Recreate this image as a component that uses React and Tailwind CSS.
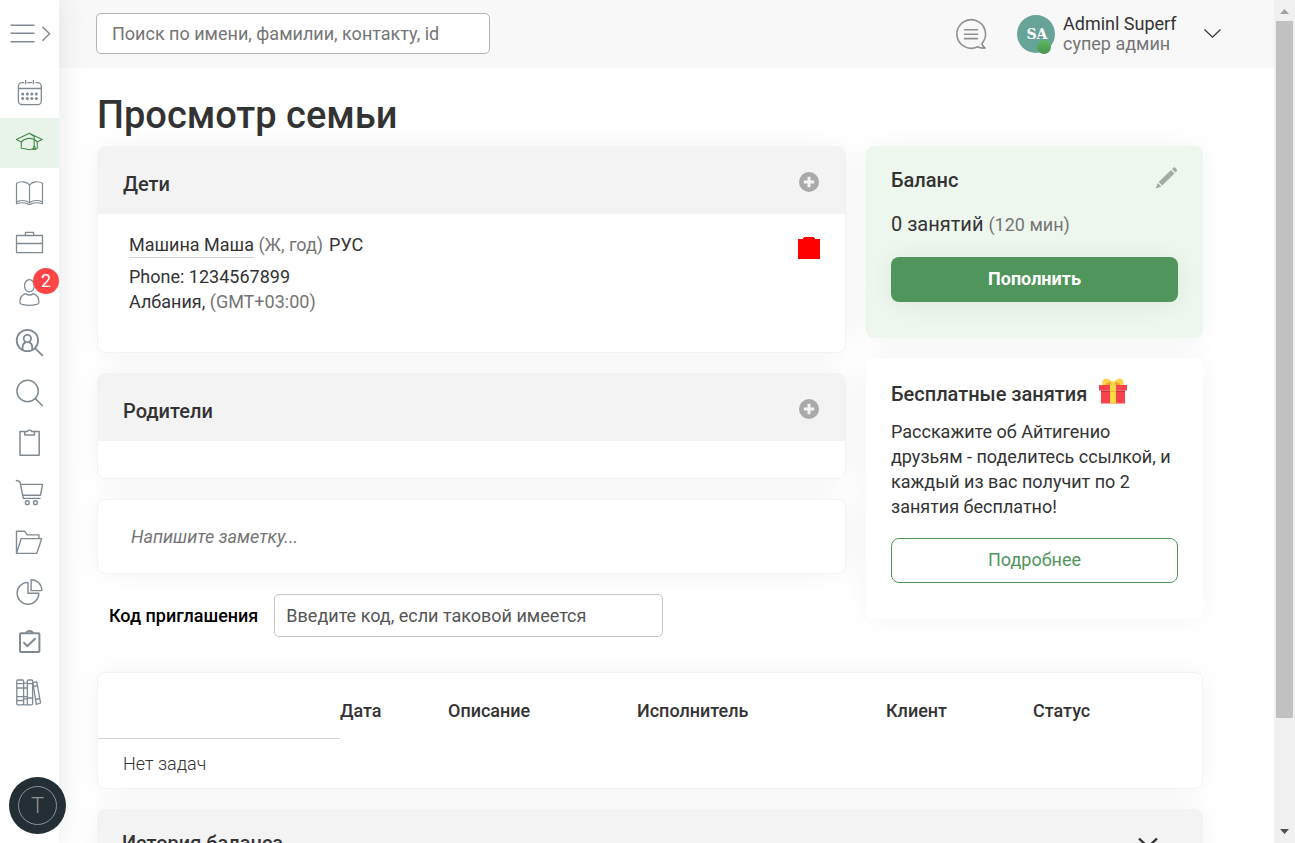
import React from "react";

const Icon = ({ children, width = 1.3 }) => (
  <svg
    viewBox="0 0 30 30"
    className="h-[30px] w-[30px]"
    fill="none"
    stroke="currentColor"
    strokeWidth={width}
    strokeLinecap="round"
    strokeLinejoin="round"
    aria-hidden="true"
  >
    {children}
  </svg>
);

const items = [
  {
    name: "Календарь",
    icon: (
      <Icon>
        <path d="M9.8 4.6H8A3.6 3.6 0 0 0 4.4 8.2v14.8A3.6 3.6 0 0 0 8 26.6h15.7a3.6 3.6 0 0 0 3.6-3.6V8.2A3.6 3.6 0 0 0 23.7 4.6h-1.8M13.6 4.6h4M4.400 10.500h22.900M11.700 2.300v3.400M19.400 2.300v3.400" />
        <g fill="currentColor" stroke="none">
          {[8.7, 13.3, 17.8, 22.3].map((x) => (
            <React.Fragment key={x}>
              <circle cx={x} cy="16" r="1.500" />
              <circle cx={x} cy="20.400" r="1.500" />
            </React.Fragment>
          ))}
        </g>
      </Icon>
    ),
  },
  {
    name: "Ученики",
    active: true,
    icon: (
      <Icon width={1.1}>
        <path d="M2.400 11.400 15.300 5.200l12.900 6.200-4.700 2.400M2.400 11.400l4.900 2.600v6.200q3.400.4 8 1.600 4-1.200 8-1.600v-6.200q-3.500-3.600-8-3.600t-8 3.600M15.300 5.200l4.900 3.300v10.500M20.200 17.500l-1.400 3.900h3l-1.600-3.900" />
      </Icon>
    ),
  },
  {
    name: "Учебники",
    icon: (
      <Icon width={1.2}>
        <path d="M15.500 6.800C12.500 3.400 7 2.800 2.500 5.300v18.600c4.500-1.900 9.500-1.700 13 .8 3.500-2.500 8.500-2.700 13-.8V5.300c-4.500-2.500-10-1.900-13 1.500v17.500M2.500 23.900v1.900c4.200-1.400 8.300-1.300 11.200.1q1.800 1 3.600 0c2.900-1.400 7-1.500 11.200-.1v-1.900" />
      </Icon>
    ),
  },
  {
    name: "Портфель",
    icon: (
      <Icon>
        <path d="M2.500 7.500h26v17.200h-26zM2.500 15.500h26M11.400 7.500V4.400h8.200v3.100" />
      </Icon>
    ),
  },
  {
    name: "Пользователи",
    badge: 2,
    icon: (
      <Icon>
        <ellipse cx="15.400" cy="7.800" rx="4.900" ry="6.100" />
        <path d="M11.600 15.600c-4 1.200-6 4.500-5.700 9.400.1 1.200 4.800 2.400 9.500 2.400s9.400-1.200 9.500-2.400c.3-4.900-1.700-8.200-5.700-9.400-2.500 1.800-5.100 1.800-7.600 0z" />
      </Icon>
    ),
  },
  {
    name: "Поиск людей",
    icon: (
      <Icon width={1.8}>
        <circle cx="13.400" cy="12.500" r="10.700" />
        <circle cx="13.400" cy="10.600" r="3.700" />
        <path d="M8.600 21.500v-2.600c0-2.100 1-3.600 2.800-4.500M18.200 21.500v-2.600c0-2.100-1-3.600-2.800-4.500M21.200 20.400l7.200 6.900" />
      </Icon>
    ),
  },
  {
    name: "Поиск",
    icon: (
      <Icon width={1.5}>
        <circle cx="13.600" cy="13" r="10.700" />
        <path d="m21.300 20.600 7 6.900" />
      </Icon>
    ),
  },
  {
    name: "Задания",
    icon: (
      <Icon width={1.5}>
        <path d="M10.800 3.500H6v23.700h19.200V3.500h-4.800M10.800 3.500v3.400h9.600V3.500h-2.600q-.3-1.200-2.200-1.200t-2.200 1.200z" />
      </Icon>
    ),
  },
  {
    name: "Магазин",
    icon: (
      <Icon width={1.4}>
        <path d="M2.400 2.500q2.900.2 3.700 1.800l3.200 16.100h16.800M6.600 6.400h21.900l-2 10.800H8.700" />
        <circle cx="13.300" cy="24.700" r="1.900" />
        <circle cx="21.400" cy="24.700" r="1.900" />
      </Icon>
    ),
  },
  {
    name: "Файлы",
    icon: (
      <Icon width={1.4}>
        <path d="M2.500 25.400V3.200h8.100l2.600 3.700h11.700v3.700M2.500 25.400l4.700-14.800h20.500l-4.900 14.800z" />
      </Icon>
    ),
  },
  {
    name: "Отчёты",
    icon: (
      <Icon width={1.4}>
        <path d="M14 4.400a10.900 10.900 0 1 0 10.900 10.900H14zM17.100 1.700v10.900h10.700C27.800 6.400 23.300 1.700 17.100 1.700z" />
      </Icon>
    ),
  },
  {
    name: "Задачи",
    icon: (
      <Icon width={2}>
        <rect x="6" y="5.200" width="19.400" height="18.700" rx="1" />
        <path d="M12.400 5q.6-2 3.200-2t3.200 2M10 14.700l3.200 3.500 7.800-7.500" />
      </Icon>
    ),
  },
  {
    name: "Библиотека",
    icon: (
      <Icon width={1.3}>
        <rect x="2.800" y="2" width="6.800" height="24.800" rx="1" />
        <rect x="13.400" y="2" width="5.200" height="24.800" rx="1" />
        <path d="M9.600 5.200h3.800M9.600 26.800h3.800M2.800 5.700h6.800M2.800 10h10.600M2.800 18.700h10.600M2.800 22.500h6.800M9.600 20.900h3.800M13.400 5.700h5.200M13.400 20h5.200M18.800 4.700l4-.8L26.600 25l-4.300 1.300zM19.300 8.500l4.200-.8M21.500 21.500l4.300-1" />
      </Icon>
    ),
  },
];

const Sidebar = () => (
  <aside className="relative z-20 flex w-[59px] shrink-0 flex-col bg-white text-[#7f8a93] shadow-[0_0_30px_rgba(0,0,0,0.1)]">
    <button aria-label="Развернуть меню" className="flex h-[68px] w-full items-center pl-[10px]">
      <svg viewBox="0 0 42 20" className="h-5 w-[42px]" fill="none" stroke="currentColor" strokeWidth="1.400">
        <path d="M.5 1.200h24M.5 9.200h24M.5 17.800h24M32.400 2.800l7.200 6.900-7.200 7" />
      </svg>
    </button>
    <nav className="flex flex-col">
      {items.map((it) => (
        <a
          key={it.name}
          href="#"
          aria-label={it.name}
          className={
            it.active
              ? "relative flex h-[50px] items-center bg-[#e8f4e9] pl-[14px] text-[#458a50]"
              : "relative flex h-[50px] items-center pl-[14px]"
          }
        >
          {it.icon}
          {it.badge && (
            <span className="absolute right-0 top-0 flex h-[26px] w-[26px] items-center justify-center rounded-full bg-[#ff4445] text-lg text-white">
              {it.badge}
            </span>
          )}
        </a>
      ))}
    </nav>
    <button
      aria-label="Открыть виджет"
      className="absolute bottom-[9px] left-[9px] flex h-[57px] w-[57px] items-center justify-center rounded-full bg-[#232f34]"
    >
      <span className="flex h-[39px] w-[39px] items-center justify-center rounded-full border border-[#8b9498] pt-0.5 text-[22px] font-light text-[#8b9498]">
        T
      </span>
    </button>
  </aside>
);

const Header = () => (
  <header className="flex h-[68px] shrink-0 items-center bg-[#f8f8f8] pl-[37px] pr-[53px]">
    <input
      type="search"
      aria-label="Поиск"
      placeholder="Поиск по имени, фамилии, контакту, id"
      className="mb-px h-[41px] w-[394px] rounded-[5px] border border-[#b3b3b3] bg-white px-[15px] placeholder:text-[#757575]"
    />
    <button aria-label="Сообщения" className="ml-auto mr-[30px]">
      <svg viewBox="0 0 32 32" className="h-8 w-8" fill="none" stroke="#8f8f8f" strokeWidth="1.600" strokeLinecap="round">
        <path d="M26.900 25.500A14.300 14.300 0 1 0 22.600 28.800c2 1.200 5 1.500 7.600 1.200-1.700-1-2.900-2.600-3.300-4.500z" strokeLinejoin="round" />
        <path d="M9.500 11.700h13M9.500 16.200h13M9.500 20.600h13" />
      </svg>
    </button>
    <button className="flex items-center text-left">
      <span className="relative flex h-[38px] w-[38px] items-center justify-center rounded-full bg-[#68a399] pl-0.5 font-['DejaVu_Serif',serif] text-sm font-bold text-white">
        SA
        <span className="absolute -bottom-px right-1 h-[14px] w-[14px] rounded-full bg-linear-to-b from-[#5cba5c] to-[#4a9350]" />
      </span>
      <span className="ml-2 flex w-[141px] flex-col leading-5">
        <span>Adminl Superf</span>
        <span className="text-[#757575]">супер админ</span>
      </span>
      <svg viewBox="0 0 17 10" className="h-[10px] w-[17px]" fill="none" stroke="#333" strokeWidth="1.200">
        <path d="m.5.500 8 7.600 8-7.600" />
      </svg>
    </button>
  </header>
);

const card = "rounded-lg border border-[#f3f3f3] bg-white shadow-[0_0_30px_rgba(0,0,0,0.05)]";

const CardHead = ({ title, action }) => (
  <div className="flex h-[67px] items-center justify-between rounded-t-lg bg-[#f3f3f3] pl-[25px] pr-[26px] pt-1.5">
    <h2 className="text-xl font-medium">{title}</h2>
    <button aria-label={action} className="-mt-1">
      <svg viewBox="0 0 20 20" className="h-5 w-5">
        <circle cx="10" cy="10" r="10" fill="#a9a9a9" />
        <path d="M10 4.800v10.400M4.800 10h10.400" stroke="#f3f3f3" strokeWidth="3" />
      </svg>
    </button>
  </div>
);

const Gift = () => (
  <svg viewBox="0 0 28 26" className="h-[26px] w-7" aria-hidden="true">
    <path d="M3.500 7C2.500 3.500 4.500.5 7 .5c3 0 5.500 2.500 7 4.500 1.500-2 4-4.500 7-4.500 2.500 0 4.500 3 3.500 6.500z" fill="#ffd24d" />
    <path d="M6.500 7c1-2.500 3.500-3.300 6-2.500V7zM21.500 7c-1-2.500-3.500-3.300-6-2.500V7z" fill="#f0a12b" />
    <rect x="12" y="3.500" width="4" height="4" rx="1" fill="#ffda44" />
    <path d="M2 13h24v12.500H2z" fill="#f8434c" />
    <path d="M0 7h28v5.500H0z" fill="#f8434c" />
    <path d="M2 12.500h24v1.500H2z" fill="#d5313b" />
    <path d="M11 7h6v18.500h-6z" fill="#ffda44" />
    <path d="M11 12.500h6V14h-6z" fill="#f5bd3a" />
  </svg>
);

const Children = () => (
  <section className={card}>
    <CardHead title="Дети" action="Добавить ребёнка" />
    <div className="flex h-[138px] items-start justify-between py-[18px] pl-[31px] pr-[25px]">
      <div className="flex flex-col">
        <p className="mb-[7px] leading-[25px]">
          <a href="#" className="border-b border-[#d3d3d3] pb-[2px]">
            Машина Маша
          </a>{" "}
          <span className="mr-[6px] text-[#757575]">(Ж, год)</span>
          <span>РУС</span>
        </p>
        <p className="leading-[25px]">Phone: 1234567899</p>
        <p className="leading-[25px]">
          Албания, <span className="text-[#757575]">(GMT+03:00)</span>
        </p>
      </div>
      <button aria-label="Удалить" className="mt-[5px]">
        <svg viewBox="0 0 22 22" className="h-[22px] w-[22px]">
          <path d="M0 2h5V1h1V0h10v1h1v1h5v20H0z" fill="#f00" />
        </svg>
      </button>
    </div>
  </section>
);

const Balance = () => (
  <section className="rounded-lg bg-[#edf7ee] px-[25px] pb-9 pt-5 shadow-[0_0_30px_rgba(0,0,0,0.05)]">
    <div className="flex items-start justify-between">
      <h2 className="text-xl font-medium leading-7">Баланс</h2>
      <button aria-label="Изменить баланс">
        <svg viewBox="0 0 24 24" className="h-6 w-6" fill="#a4aba4">
          <path d="m17 4 3.500 3.500L8.200 19.500l-3.500-3.500zM18 2.900l1.600-1.500q.8-.5 1.500.2l1.800 1.800q.6.800 0 1.500l-1.500 1.500zM3.800 17l3.500 3.500-4.600 1.700q-.9.200-.6-.6z" />
        </svg>
      </button>
    </div>
    <p className="mt-4 text-xl leading-7">
      0 занятий <span className="text-lg text-[#757575]">(120 мин)</span>
    </p>
    <button className="mt-[18px] h-[45px] w-full rounded-lg bg-[#50965c] pb-0.5 font-bold text-white shadow-[0_2px_30px_rgba(0,0,0,0.07)]">
      Пополнить
    </button>
  </section>
);

const FreeLessons = () => (
  <section className="rounded-lg bg-white px-[25px] pb-9 pt-5 shadow-[0_0_30px_rgba(0,0,0,0.05)]">
    <div className="flex items-start gap-3">
      <h2 className="pt-[2px] text-xl font-medium leading-7">Бесплатные занятия</h2>
      <Gift />
    </div>
    <p className="mt-[11px] leading-[25px]">
      Расскажите об Айтигенио друзьям - поделитесь ссылкой, и каждый из вас получит по 2 занятия бесплатно!
    </p>
    <button className="mt-[19px] h-[45px] w-full rounded-lg border border-[#50965c] pb-0.5 text-[#50965c]">
      Подробнее
    </button>
  </section>
);

const Tasks = () => (
  <section className={`${card} mt-[35px] pb-3`}>
    <table className="w-full table-fixed text-left">
      <colgroup>
        <col className="w-[242px]" />
        <col className="w-[108px]" />
        <col className="w-[189px]" />
        <col className="w-[249px]" />
        <col className="w-[147px]" />
        <col />
      </colgroup>
      <thead>
        <tr className="h-[65px]">
          <td />
          <th className="pt-[10px] font-medium">Дата</th>
          <th className="pt-[10px] font-medium">Описание</th>
          <th className="pt-[10px] font-medium">Исполнитель</th>
          <th className="pt-[10px] font-medium">Клиент</th>
          <th className="pt-[10px] font-medium">Статус</th>
        </tr>
      </thead>
      <tbody>
        <tr>
          <td className="border-t border-[#d3d3d3] pl-[25px] pt-3 font-light leading-[25px]">Нет задач</td>
        </tr>
      </tbody>
    </table>
  </section>
);

const Scrollbar = () => (
  <div aria-hidden="true" className="flex w-[21px] shrink-0 flex-col items-center bg-[#f0f0f0]">
    <svg viewBox="0 0 21 21" className="h-[21px] w-[21px]">
      <path d="M6 14h9l-4.500-5z" fill="#a0a0a0" />
    </svg>
    <div className="h-[697px] w-[17px] bg-[#c1c1c1]" />
    <svg viewBox="0 0 21 21" className="mt-auto h-[21px] w-[21px]">
      <path d="M6 7h9l-4.500 5z" fill="#505050" />
    </svg>
  </div>
);

export default function App() {
  return (
    <div className="flex h-screen overflow-hidden bg-white font-[Roboto,sans-serif] text-lg text-[#333]">
      <Sidebar />
      <div className="flex min-w-0 flex-1 flex-col">
        <Header />
        <main className="flex-1 overflow-hidden pl-[38px] pr-[71px] pt-6">
          <h1 className="mb-2 text-[38px] font-medium leading-[46px]">Просмотр семьи</h1>
          <div className="flex items-start gap-5">
            <div className="flex min-w-0 flex-1 flex-col gap-5">
              <Children />
              <section className={card}>
                <CardHead title="Родители" action="Добавить родителя" />
                <div className="h-[37px]" />
              </section>
              <textarea
                aria-label="Заметка"
                rows={1}
                placeholder="Напишите заметку..."
                className={`${card} block h-[75px] resize-none px-[33px] py-6 italic leading-[25px] placeholder:text-[#757575]`}
              />
              <div className="flex items-center pl-3">
                <label htmlFor="invite" className="mr-4 font-medium text-black">
                  Код приглашения
                </label>
                <input
                  id="invite"
                  type="text"
                  placeholder="Введите код, если таковой имеется"
                  className="h-[43px] w-[389px] rounded-[5px] border border-[#c4c4c4] bg-white px-[11px] placeholder:text-[#555]"
                />
              </div>
            </div>
            <div className="flex w-[337px] shrink-0 flex-col gap-5">
              <Balance />
              <FreeLessons />
            </div>
          </div>
          <Tasks />
          <section className="mt-5 rounded-lg bg-[#f3f3f3] shadow-[0_0_30px_rgba(0,0,0,0.05)]">
            <button className="flex h-[68px] w-full items-center justify-between pl-[25px] pr-[45px] text-left">
              <span className="text-xl font-medium">История баланса</span>
              <svg viewBox="0 0 20 12" className="h-3 w-5" fill="none" stroke="#333" strokeWidth="2.400">
                <path d="m1 1.500 9 8.500 9-8.500" />
              </svg>
            </button>
          </section>
        </main>
      </div>
      <Scrollbar />
    </div>
  );
}
